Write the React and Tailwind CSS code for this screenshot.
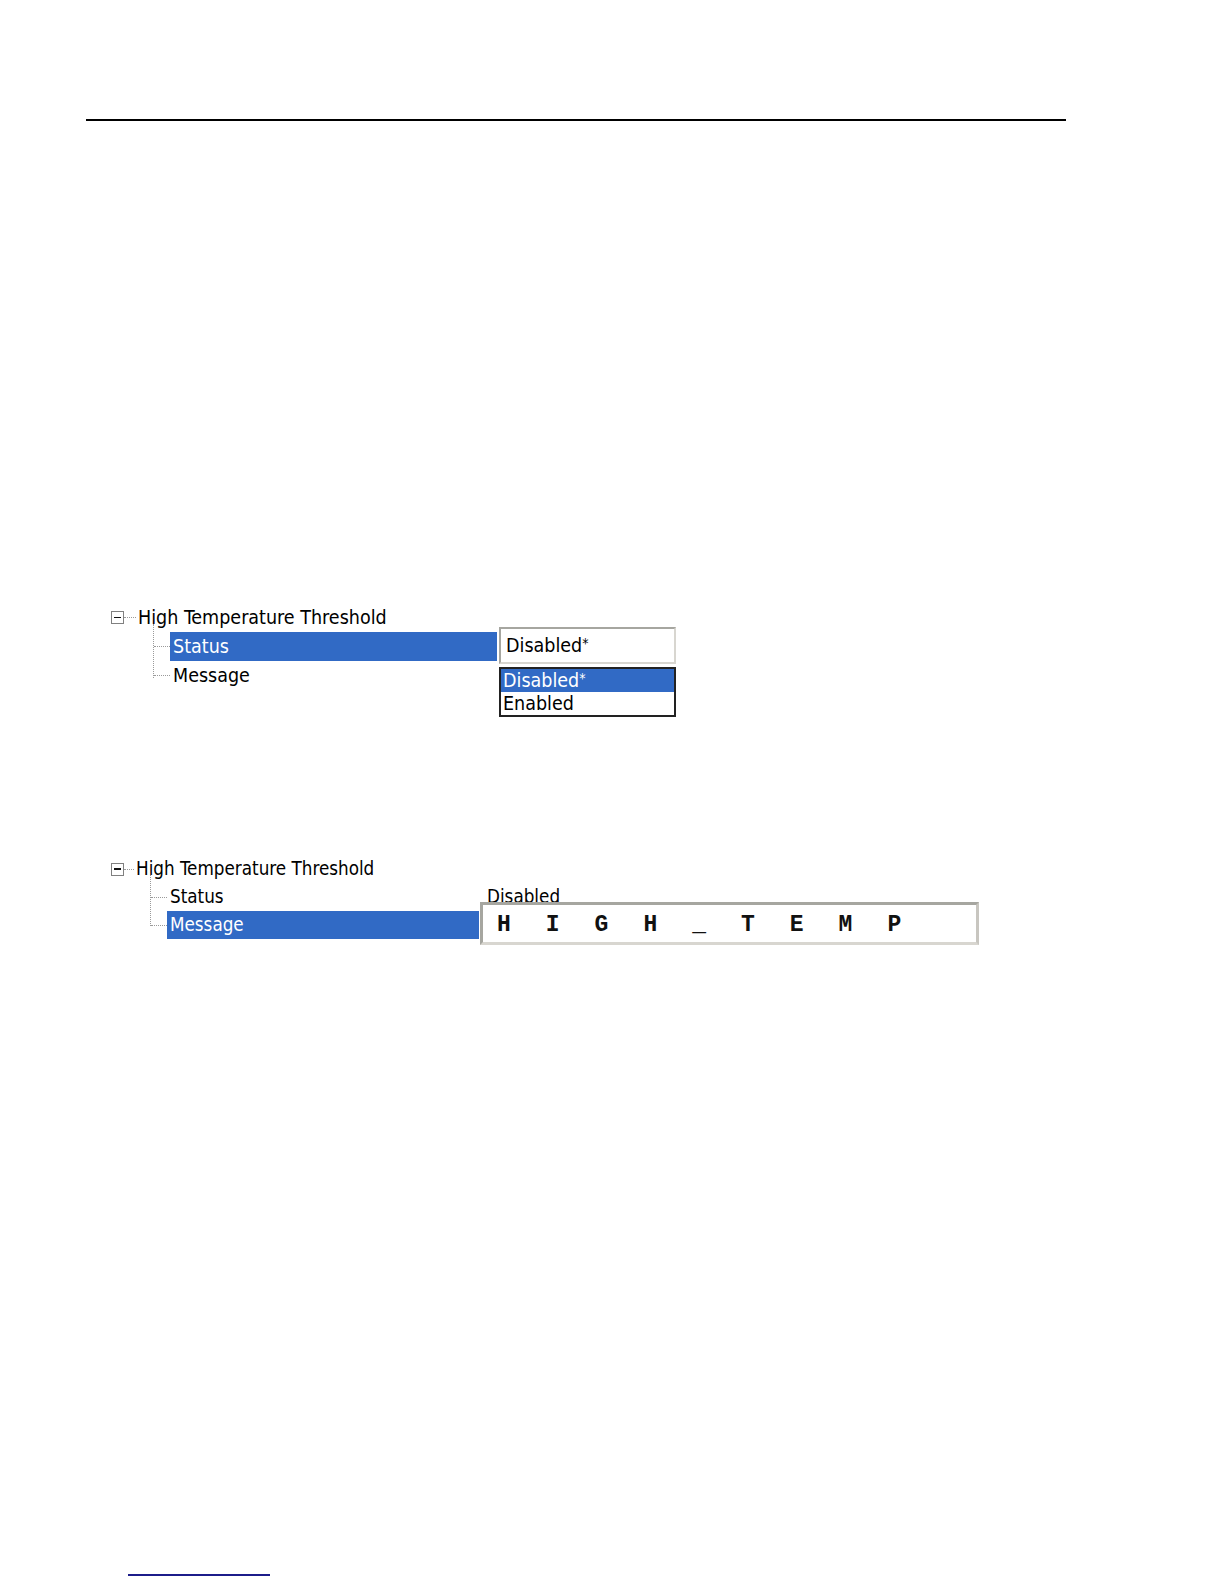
export default function App() {
  const tree = "font-['DejaVu_Sans_Condensed','DejaVu_Sans','Liberation_Sans',sans-serif]";
  return (
    <div className={`relative w-[1224px] h-[1584px] bg-white overflow-hidden text-black ${tree}`}>
      <div className="mt-[119px] ml-[86px] w-[980px] h-[2px] bg-black" />

      {/* Tree 1 */}
      <div className="relative mt-[482px] h-[87px] text-[19.5px] leading-none">
        <div className="absolute left-[153px] top-[21px] h-[54px] border-l border-dotted border-[#9a9a9a]" />
        <div className="flex items-center h-[29px]">
          <div className="ml-[111px] w-[13px] h-[13px] border border-[#808080] bg-white flex items-center justify-center">
            <div className="w-[7px] h-[1.5px] bg-[#111]" />
          </div>
          <div className="w-[12px] border-t border-dotted border-[#9a9a9a]" />
          <span className="ml-[2px]">High Temperature Threshold</span>
        </div>
        <div className="flex items-center h-[29px]">
          <div className="ml-[154px] w-[16px] border-t border-dotted border-[#9a9a9a]" />
          <div className="w-[327px] h-full bg-[#316ac5] text-white flex items-center pl-[3px]">Status</div>
        </div>
        <div className="flex items-center h-[29px]">
          <div className="ml-[154px] w-[16px] border-t border-dotted border-[#9a9a9a]" />
          <div className="w-[327px] h-full flex items-center pl-[3px]">Message</div>
        </div>

        {/* combo edit */}
        <div className="absolute left-[499px] top-[24px] w-[177px] h-[37px] bg-white border-2 border-t-[#a6a6a0] border-l-[#a6a6a0] border-r-[#d8d6d0] border-b-[#d8d6d0] flex items-center pl-[5px]">
          <span>Disabled<span className="relative -top-[4px] text-[14px]">*</span></span>
        </div>
        {/* dropdown list */}
        <div className="absolute left-[499px] top-[64px] w-[177px] h-[50px] bg-white border-2 border-[#222]">
          <div className="h-[23px] bg-[#316ac5] text-white flex items-center pl-[2px]">
            <span>Disabled<span className="relative -top-[4px] text-[14px]">*</span></span>
          </div>
          <div className="h-[23px] flex items-center pl-[2px]">Enabled</div>
        </div>
      </div>

      {/* Tree 2 */}
      <div className="relative mt-[165px] h-[84px] text-[18.7px] leading-none">
        <div className="absolute left-[150px] top-[20px] h-[51px] border-l border-dotted border-[#9a9a9a]" />
        <div className="flex items-center h-[28px]">
          <div className="ml-[111px] w-[13px] h-[13px] border border-[#808080] bg-white flex items-center justify-center">
            <div className="w-[7px] h-[1.5px] bg-[#111]" />
          </div>
          <div className="w-[10px] border-t border-dotted border-[#9a9a9a]" />
          <span className="ml-[2px]">High Temperature Threshold</span>
        </div>
        <div className="flex items-center h-[28px]">
          <div className="ml-[151px] w-[16px] border-t border-dotted border-[#9a9a9a]" />
          <div className="w-[312px] h-full flex items-center pl-[3px]">Status</div>
          <span className="ml-[8px]">Disabled</span>
        </div>
        <div className="flex items-center h-[28px]">
          <div className="ml-[151px] w-[16px] border-t border-dotted border-[#9a9a9a]" />
          <div className="w-[312px] h-full bg-[#316ac5] text-white flex items-center pl-[3px]">Message</div>
        </div>

        {/* edit box */}
        <div className="absolute left-[480px] top-[47px] w-[499px] h-[43px] bg-white border-[3px] border-t-[#a6a6a0] border-l-[#a6a6a0] border-r-[#c8c6c0] border-b-[#d8d6d0] flex items-center pl-[14px] pt-[4px]">
          <span className="font-['Liberation_Mono','Courier_New',monospace] font-bold text-[23px] tracking-[35px] text-[#111]">HIGH_TEMP</span>
        </div>
      </div>

      <div className="mt-[635px] ml-[128px] w-[142px] h-[2px] bg-[#1c1c8a]" />
    </div>
  );
}
